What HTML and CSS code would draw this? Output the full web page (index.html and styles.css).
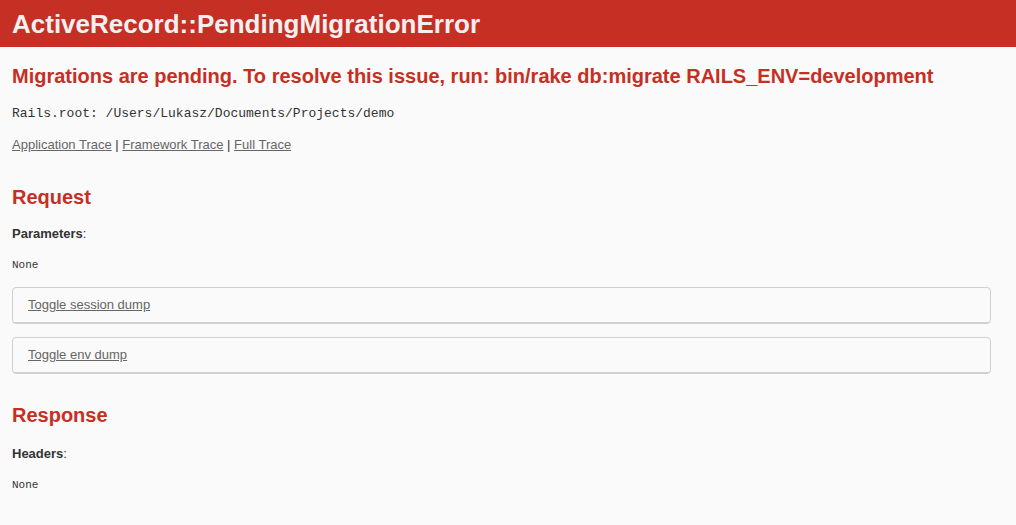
FILE: index.html
```html
<!DOCTYPE html>
<html>
<head>
  <meta charset="utf-8"/>
  <link rel="stylesheet" href="styles.css">
</head>
<body>
  <header>
    <h1>ActiveRecord::PendingMigrationError</h1>
  </header>

  <div id="container">
    <h2 class="message">Migrations are pending. To resolve this issue, run: bin/rake db:migrate RAILS_ENV=development</h2>

    <p class="root"><code>Rails.root: /Users/Lukasz/Documents/Projects/demo</code></p>

    <p class="traces">
      <a href="#">Application Trace</a> |
      <a href="#">Framework Trace</a> |
      <a href="#">Full Trace</a>
    </p>

    <h2>Request</h2>
    <p><b>Parameters</b>:</p>
    <pre>None</pre>

    <div class="details">
      <div class="summary"><a href="#">Toggle session dump</a></div>
    </div>

    <div class="details">
      <div class="summary"><a href="#">Toggle env dump</a></div>
    </div>

    <h2 class="response">Response</h2>
    <p><b>Headers</b>:</p>
    <pre>None</pre>
  </div>
</body>
</html>
```

FILE: styles.css
```css
body {
  background-color: #fafafa;
  color: #333;
  margin: 0;
}
body, p {
  font-family: "Liberation Sans", Arial, sans-serif;
  font-size: 13px;
  line-height: 18px;
}
p {
  margin: 13px 0;
}
p.root {
  margin-top: 15px;
  margin-bottom: 12px;
}
code {
  font-family: "Liberation Mono", monospace;
  font-size: 13px;
}
pre {
  font-family: "Liberation Mono", monospace;
  font-size: 11px;
  line-height: 18px;
  margin: 13px 0;
}
header {
  color: #f0f0f0;
  background: #c52f24;
  height: 47px;
  padding: 0 12px;
  display: flex;
  align-items: center;
}
h1 {
  margin: 0;
  font-size: 26px;
  line-height: 30px;
  font-weight: bold;
}
#container {
  padding: 0 12px;
}
h2 {
  color: #c52f24;
  font-size: 20px;
  line-height: 25px;
  margin: 31px 0 15px;
}
h2.message {
  margin-top: 17px;
  margin-bottom: 13px;
}
h2.response {
  margin-top: 29px;
  margin-bottom: 17px;
}
a {
  color: #666;
}
.details {
  border: 1px solid #d0d0d0;
  border-radius: 4px;
  margin: 13px 0;
  width: 977px;
}
.summary {
  padding: 8px 15px;
  border-bottom: 1px solid #d0d0d0;
}
```
